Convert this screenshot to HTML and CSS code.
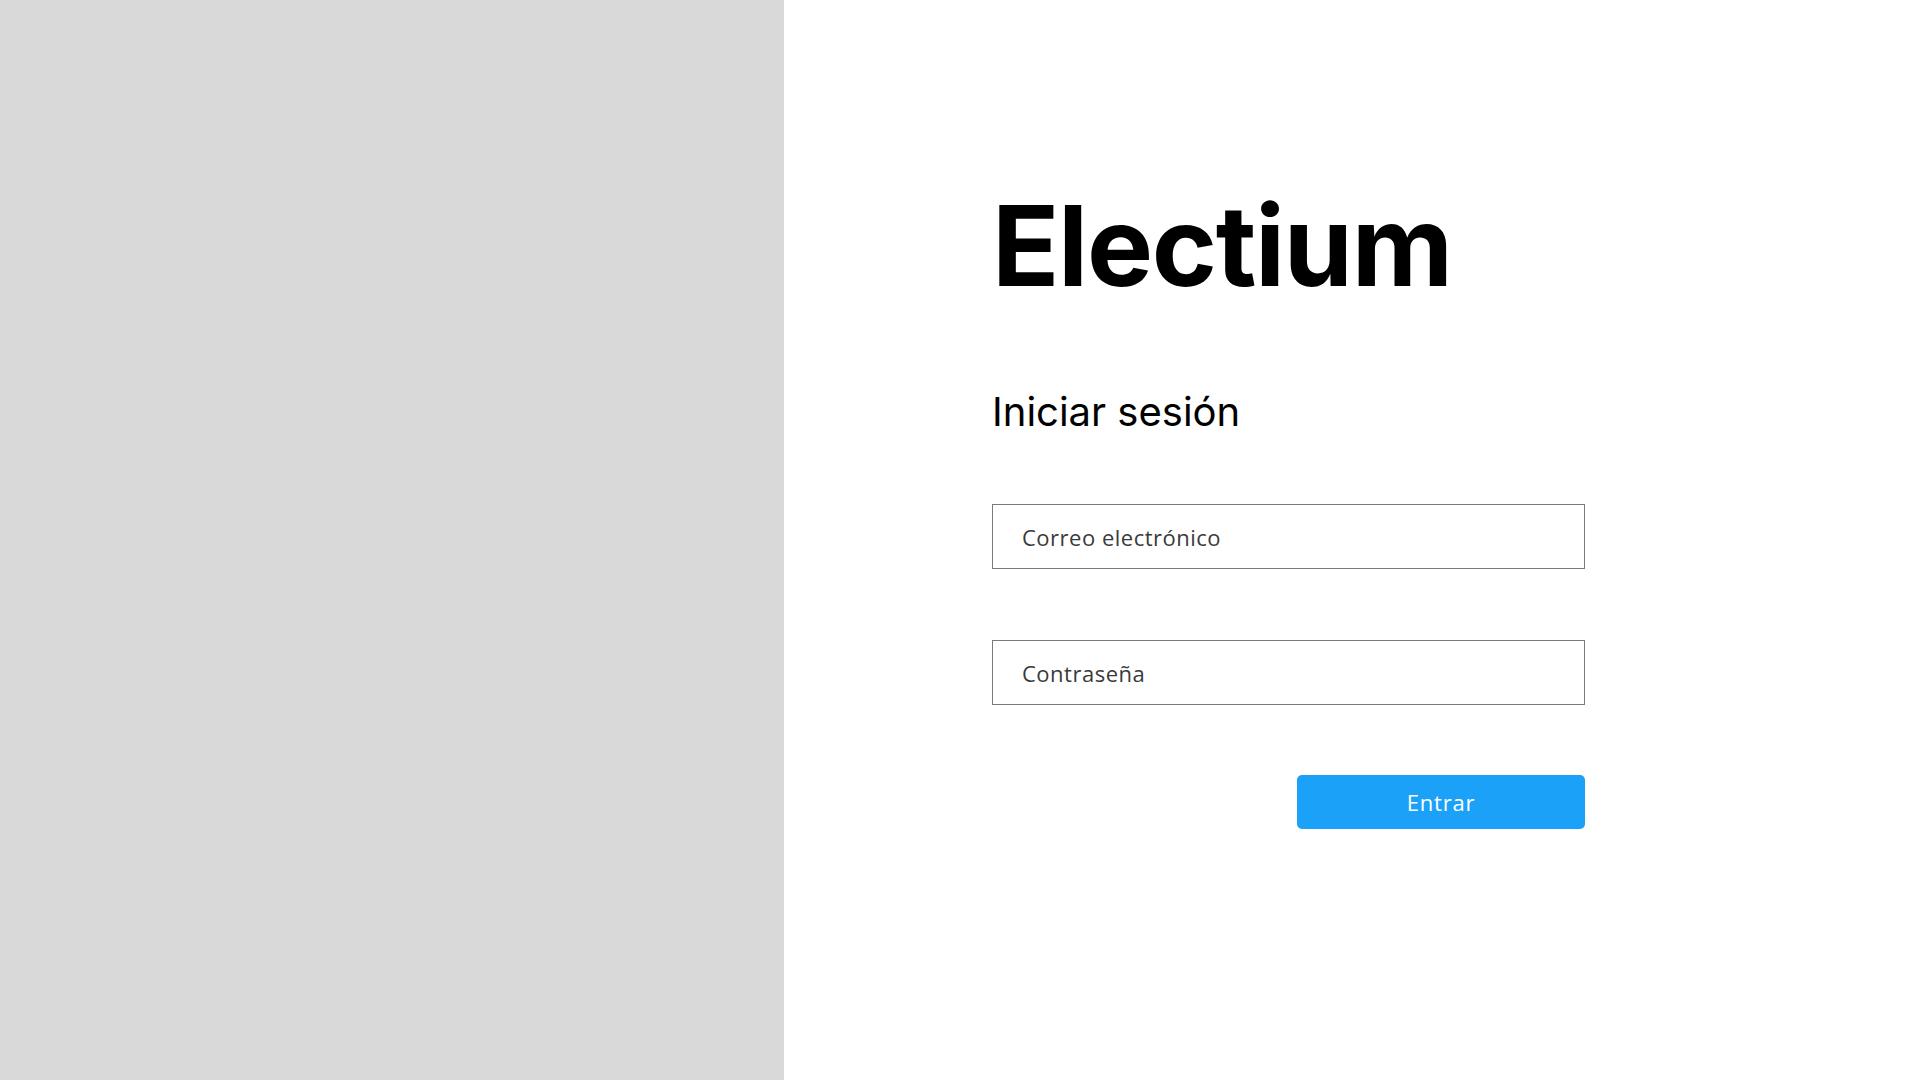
FILE: index.html
```html
<!DOCTYPE html>
<html lang="es">
<head>
<meta charset="utf-8">
<title>Electium</title>
<link rel="stylesheet" href="styles.css">
</head>
<body>
<div class="page">
  <aside class="side"></aside>
  <main class="main">
    <form class="form">
      <h1 class="brand">Electium</h1>
      <h2 class="subtitle">Iniciar sesión</h2>
      <input class="field field-first" type="email" placeholder="Correo electrónico">
      <input class="field" type="password" placeholder="Contraseña">
      <div class="actions">
        <button class="btn" type="button">Entrar</button>
      </div>
    </form>
  </main>
</div>
</body>
</html>
```
FILE: styles.css
```css
* { box-sizing: border-box; }
html, body { margin: 0; padding: 0; background: #ffffff; }
.page {
  display: flex;
  width: 1920px;
  height: 1080px;
}
.side {
  width: 784px;
  flex: 0 0 784px;
  background: #d9d9d9;
}
.main {
  flex: 1;
  padding-top: 179px;
  padding-left: 208px;
}
.form {
  width: 593px;
  display: flex;
  flex-direction: column;
}
.brand {
  margin: 0;
  font-family: Inter, "Liberation Sans", sans-serif;
  font-weight: 700;
  font-size: 111px;
  line-height: 134px;
  color: #000;
  letter-spacing: -1.3px;
}
.subtitle {
  margin: 75px 0 0 0;
  font-family: Inter, "Liberation Sans", sans-serif;
  font-weight: 400;
  font-size: 40px;
  line-height: 48px;
  color: #000;
}
.field {
  margin-top: 71px;
  width: 593px;
  height: 65px;
  border: 1px solid #7b7b7b;
  border-radius: 0;
  padding: 0 0 0 29px;
  font-family: "Open Sans", "Liberation Sans", sans-serif;
  font-size: 22px;
  letter-spacing: 0.5px;
  color: #3a3a3a;
  background: #fff;
  outline: none;
}
.field-first { margin-top: 68px; }
.field::placeholder { color: #3a3a3a; opacity: 1; }
.actions {
  margin-top: 70px;
  display: flex;
  justify-content: flex-end;
}
.btn {
  width: 288px;
  height: 54px;
  border: none;
  border-radius: 5px;
  background: #1ca1f9;
  color: #fff;
  font-family: "Open Sans", "Liberation Sans", sans-serif;
  font-size: 22px;
  letter-spacing: 0.8px;
  cursor: pointer;
}
```
